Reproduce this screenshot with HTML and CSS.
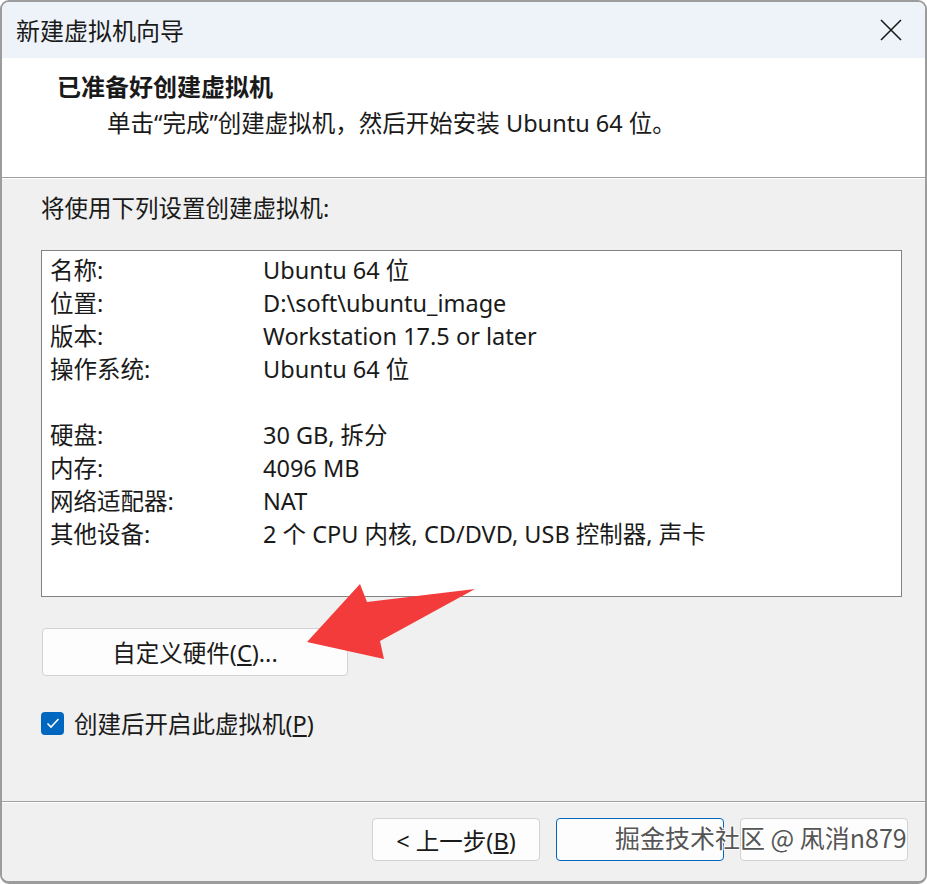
FILE: index.html
```html
<!DOCTYPE html>
<html lang="zh-CN">
<head>
<meta charset="utf-8">
<title>新建虚拟机向导</title>
<link rel="stylesheet" href="styles.css">
</head>
<body>
<div class="window">
  <div class="titlebar">
    <span class="title">新建虚拟机向导</span>
    <svg class="close" width="24" height="24" viewBox="0 0 24 24"><path d="M2 2 L22 22 M22 2 L2 22" stroke="#1a1a1a" stroke-width="1.6" fill="none"/></svg>
  </div>
  <div class="header">
    <div class="heading">已准备好创建虚拟机</div>
    <div class="subtext">单击“完成”创建虚拟机，然后开始安装 Ubuntu 64 位。</div>
  </div>
  <div class="body">
    <div class="intro">将使用下列设置创建虚拟机:</div>
    <div class="listbox">
      <div class="row"><span class="k">名称:</span><span class="v">Ubuntu 64 位</span></div>
      <div class="row"><span class="k">位置:</span><span class="v">D:\soft\ubuntu_image</span></div>
      <div class="row"><span class="k">版本:</span><span class="v">Workstation 17.5 or later</span></div>
      <div class="row"><span class="k">操作系统:</span><span class="v">Ubuntu 64 位</span></div>
      <div class="row"></div>
      <div class="row"><span class="k">硬盘:</span><span class="v">30 GB, 拆分</span></div>
      <div class="row"><span class="k">内存:</span><span class="v">4096 MB</span></div>
      <div class="row"><span class="k">网络适配器:</span><span class="v">NAT</span></div>
      <div class="row"><span class="k">其他设备:</span><span class="v">2 个 CPU 内核, CD/DVD, USB 控制器, 声卡</span></div>
    </div>
    <div class="hw-row">
      <button class="btn hw">自定义硬件(<u>C</u>)...</button>
      <svg class="arrow" width="200" height="90" viewBox="290 580 200 90"><polygon points="305,643 358,585 365,603 473,590 378,642 382,660" fill="#f43b3b"/></svg>
    </div>
    <label class="check">
      <span class="box"><svg width="14" height="12" viewBox="0 0 14 12"><path d="M1.5 6.5 L5 10 L12.5 2" stroke="#fff" stroke-width="1.6" fill="none"/></svg></span>
      <span>创建后开启此虚拟机(<u>P</u>)</span>
    </label>
  </div>
  <div class="footer">
    <button class="btn nav">&lt; 上一步(<u>B</u>)</button>
    <button class="btn nav default"></button>
    <button class="btn nav"></button>
    <div class="watermark">掘金技术社区 @ 凩消n879</div>
  </div>
</div>
</body>
</html>
```
FILE: styles.css
```css
html, body {
  margin: 0;
  padding: 0;
  background: #ffffff;
}
body {
  font-family: "Noto Sans", "Noto Sans CJK SC", sans-serif;
  color: #1a1a1a;
}
.window {
  width: 927px;
  height: 884px;
  box-sizing: border-box;
  border: 2px solid #9c9c9c;
  border-bottom-width: 3px;
  border-radius: 9px;
  overflow: hidden;
  display: flex;
  flex-direction: column;
  position: relative;
}
.titlebar {
  height: 56px;
  background: #eef3f9;
  display: flex;
  align-items: center;
  justify-content: space-between;
  padding: 0 22px 0 14px;
  flex: none;
}
.title {
  font-size: 24px;
  font-family: "Noto Sans CJK SC", sans-serif;
  margin-top: -2px;
}
.close {
  display: block;
}
.header {
  background: #ffffff;
  height: 120px;
  box-sizing: border-box;
  padding: 12px 0 0 55px;
  border-bottom: 1px solid #a0a0a0;
  flex: none;
}
.heading {
  font-size: 24px;
  font-weight: bold;
  font-family: "Noto Sans CJK SC", sans-serif;
  line-height: 32px;
}
.subtext {
  font-size: 23.5px;
  line-height: 32px;
  margin-top: 5px;
  padding-left: 50px;
}
.body {
  flex: 1;
  background: #f0f0f0;
  padding: 13px 23px 0 39px;
  border-top: 1px solid #ffffff;
}
.intro {
  font-size: 23.5px;
  line-height: 32px;
}
.listbox {
  margin-top: 26px;
  height: 347px;
  box-sizing: border-box;
  background: #ffffff;
  border: 1px solid #828282;
  padding: 3px 0 0 8px;
  font-size: 23.5px;
}
.row {
  display: flex;
  height: 33px;
  line-height: 33px;
}
.k {
  width: 213px;
  flex: none;
}
.hw-row {
  position: relative;
  margin-top: 31px;
  height: 48px;
}
.btn {
  font-family: "Noto Sans", "Noto Sans CJK SC", sans-serif;
  font-size: 23.5px;
  color: #1a1a1a;
  background: #fdfdfd;
  border: 1px solid #d2d2d2;
  border-radius: 4px;
  padding: 0;
}
.hw {
  width: 306px;
  height: 48px;
  margin-left: 1px;
}
.arrow {
  position: absolute;
  left: 251px;
  top: -49px;
}
.check {
  display: flex;
  align-items: center;
  gap: 10px;
  margin-top: 30px;
  font-size: 23.5px;
}
.box {
  width: 23px;
  height: 23px;
  border-radius: 4px;
  background: #0067c0;
  display: flex;
  align-items: center;
  justify-content: center;
}
.footer {
  height: 75px;
  flex: none;
  background: #f0f0f0;
  border-top: 1px solid #a0a0a0;
  box-shadow: inset 0 1px 0 #ffffff;
  display: flex;
  align-items: center;
  justify-content: flex-end;
  gap: 16px;
  padding: 0 17px 4px 0;
  position: relative;
}
.nav {
  width: 168px;
  height: 43px;
}
.default {
  border: 1px solid #0067c0;
}
.watermark {
  position: absolute;
  left: 613px;
  top: 17px;
  font-size: 25px;
  color: #555;
  text-shadow: 1px 1px 0 #fff, -1px -1px 0 #fff, 1px -1px 0 #fff, -1px 1px 0 #fff;
  font-family: "Noto Sans CJK SC", sans-serif;
}
```
